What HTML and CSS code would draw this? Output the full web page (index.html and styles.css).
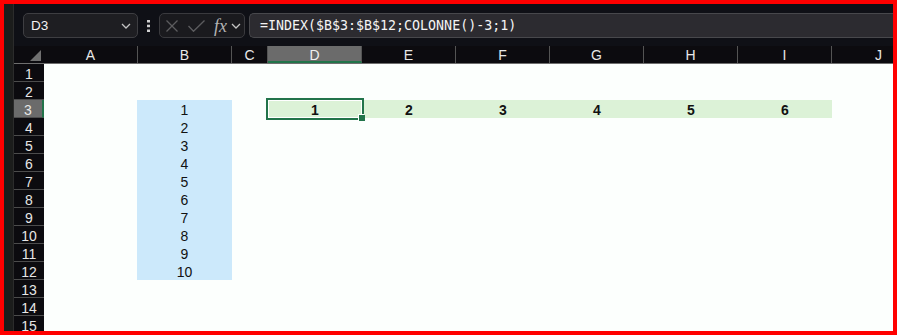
FILE: index.html
```html
<!DOCTYPE html>
<html lang="fr">
<head>
    <meta charset="UTF-8">
    <meta name="viewport" content="width=device-width, initial-scale=1.0">
    <title>INDEX COLONNE</title>
    <link rel="stylesheet" href="styles.css">
</head>
<body>

<div class="window">
    <div class="edge"></div>

    <div class="main">
        <div class="toolbar">
            <div class="name-box">
                <span>D3</span>
                <svg class="chevron" width="10" height="6" viewBox="0 0 10 6"><polyline points="1,1 5,5 9,1"/></svg>
            </div>
            <div class="dots">
                <svg width="3" height="12" viewBox="0 0 3 12"><rect x="0" y="0" width="3" height="2.5"/><rect x="0" y="4.7" width="3" height="2.5"/><rect x="0" y="9.5" width="3" height="2.5"/></svg>
            </div>
            <div class="fx-box">
                <svg class="cancel" width="12" height="12" viewBox="0 0 12 12"><line x1="0.5" y1="0.5" x2="11.5" y2="11.5"/><line x1="11.5" y1="0.5" x2="0.5" y2="11.5"/></svg>
                <svg class="enter" width="17" height="12" viewBox="0 0 17 12"><polyline points="0.5,6 5.5,11.3 16.5,0.5"/></svg>
                <span class="fx">fx</span>
                <svg class="chevron" width="10" height="6" viewBox="0 0 10 6"><polyline points="1,1 5,5 9,1"/></svg>
            </div>
            <div class="formula">=INDEX($B$3:$B$12;COLONNE()-3;1)</div>
        </div>

        <div class="sheet">
            <div class="col-heads">
                <div class="corner">
                    <svg width="11" height="11" viewBox="0 0 11 11"><polygon points="11,0 11,11 0,11"/></svg>
                </div>
                <div class="col-head">A</div>
                <div class="col-head">B</div>
                <div class="col-head narrow">C</div>
                <div class="col-head active">D</div>
                <div class="col-head">E</div>
                <div class="col-head">F</div>
                <div class="col-head">G</div>
                <div class="col-head">H</div>
                <div class="col-head">I</div>
                <div class="col-head">J</div>
            </div>

            <div class="body">
                <div class="row-heads">
                    <div class="row-head">1</div>
                    <div class="row-head">2</div>
                    <div class="row-head active">3</div>
                    <div class="row-head">4</div>
                    <div class="row-head">5</div>
                    <div class="row-head">6</div>
                    <div class="row-head">7</div>
                    <div class="row-head">8</div>
                    <div class="row-head">9</div>
                    <div class="row-head">10</div>
                    <div class="row-head">11</div>
                    <div class="row-head">12</div>
                    <div class="row-head">13</div>
                    <div class="row-head">14</div>
                    <div class="row-head">15</div>
                </div>

                <div class="cells">
                    <div class="source-range">
                        <div class="cell">1</div>
                        <div class="cell">2</div>
                        <div class="cell">3</div>
                        <div class="cell">4</div>
                        <div class="cell">5</div>
                        <div class="cell">6</div>
                        <div class="cell">7</div>
                        <div class="cell">8</div>
                        <div class="cell">9</div>
                        <div class="cell">10</div>
                    </div>

                    <div class="result-range">
                        <div class="cell selected">1<span class="fill-handle"></span></div>
                        <div class="cell">2</div>
                        <div class="cell">3</div>
                        <div class="cell">4</div>
                        <div class="cell">5</div>
                        <div class="cell">6</div>
                    </div>
                </div>
            </div>
        </div>
    </div>
</div>

</body>
</html>
```

FILE: styles.css
```css
body {
    margin: 0;
    background: #fff;
    font-family: "Liberation Sans", Arial, sans-serif;
}

.window {
    width: 897px;
    height: 335px;
    box-sizing: border-box;
    border: 4px solid #ff0000;
    display: flex;
    overflow: hidden;
    background: #0d0d10;
}

.edge {
    width: 9px;
    flex-shrink: 0;
    background: #1c1d1c;
    border-right: 1px solid #2c2c2c;
}

.main {
    flex: 1;
    min-width: 0;
    display: flex;
    flex-direction: column;
}

/* toolbar with name box and formula bar */
.toolbar {
    height: 42px;
    flex-shrink: 0;
    box-sizing: border-box;
    padding: 9px 0 0 9px;
    display: flex;
    align-items: flex-start;
    background: #0f1016;
}

.name-box {
    width: 115px;
    height: 25px;
    box-sizing: border-box;
    border: 1px solid #3e3e42;
    border-radius: 5px;
    background: #1e1e22;
    display: flex;
    align-items: center;
    justify-content: space-between;
    padding: 0 6px 0 7px;
    color: #f2f2f2;
    font-size: 13.5px;
    line-height: 23px;
}

.chevron polyline {
    fill: none;
    stroke: #c4c4c4;
    stroke-width: 1.3;
}

.dots {
    width: 21px;
    height: 25px;
    display: flex;
    align-items: center;
    justify-content: center;
}

.dots rect {
    fill: #d0d0d0;
}

.fx-box {
    width: 86px;
    height: 25px;
    box-sizing: border-box;
    border: 1px solid #3a3a3e;
    border-radius: 5px;
    background: #1a1a1e;
    display: flex;
    align-items: center;
    padding-left: 6px;
}

.cancel line, .enter polyline {
    fill: none;
    stroke: #5c5c5f;
    stroke-width: 1.3;
}

.enter {
    margin-left: 10px;
}

.fx {
    margin-left: 9px;
    font-family: "Liberation Serif", serif;
    font-style: italic;
    font-size: 18px;
    color: #b4b4b4;
    line-height: 20px;
}

.fx-box .chevron {
    margin-left: 4px;
}

.formula {
    flex: 1;
    height: 25px;
    margin-left: 4px;
    box-sizing: border-box;
    border: 1px solid #48484c;
    border-right: none;
    border-radius: 5px 0 0 5px;
    background: #2c2b30;
    padding-left: 10px;
    color: #f4f4f4;
    font-family: "DejaVu Sans Mono", monospace;
    font-size: 13.3px;
    line-height: 23px;
    white-space: nowrap;
}

/* grid headers */
.sheet {
    flex: 1;
    display: flex;
    flex-direction: column;
    overflow: hidden;
}

.col-heads {
    display: flex;
    height: 18px;
    flex-shrink: 0;
    background: #0c0b0f;
    border-bottom: 1px solid #6e6e6e;
    box-sizing: border-box;
}

.corner {
    width: 30px;
    flex-shrink: 0;
    display: flex;
    align-items: flex-end;
    justify-content: flex-end;
    padding: 0 3px 2px 0;
    box-sizing: border-box;
}

.corner polygon {
    fill: #707070;
}

.col-head {
    width: 94px;
    flex-shrink: 0;
    box-sizing: border-box;
    border-right: 1px solid #545454;
    text-align: center;
    color: #e8e8e8;
    font-size: 14px;
    line-height: 18px;
}

.col-head.narrow {
    width: 36px;
}

.col-head.active {
    background: #6b6b6b;
    border-bottom: 2px solid #22744a;
    color: #f0f0f0;
}

.body {
    flex: 1;
    display: flex;
}

.row-heads {
    width: 30px;
    flex-shrink: 0;
    background: #0c0b0f;
}

.row-head {
    height: 18px;
    box-sizing: border-box;
    border-bottom: 1px solid #4c4c4c;
    text-align: center;
    color: #e6e6e6;
    font-size: 14px;
    line-height: 20px;
}

.row-head.active {
    background: #6b6b6b;
    border-right: 2px solid #22744a;
}

/* cells */
.cells {
    flex: 1;
    display: grid;
    grid-template-columns: 94px 94px 36px repeat(7, 94px);
    grid-template-rows: repeat(15, 18px);
    background: #fcfffd;
    font-size: 14px;
    color: #111;
}

.cell {
    height: 18px;
    line-height: 20px;
    text-align: center;
}

.source-range {
    grid-column: 2;
    grid-row: 3 / span 10;
    background: #cce9fb;
    margin-left: -1px;
}

.result-range {
    grid-column: 4 / span 6;
    grid-row: 3;
    display: grid;
    grid-template-columns: repeat(6, 94px);
    background: #dcf2d7;
    font-weight: bold;
}

.selected {
    position: relative;
    z-index: 1;
    box-shadow: 0 0 0 2px #22744a, inset 0 0 0 1px #fff;
}

.fill-handle {
    position: absolute;
    right: -3px;
    bottom: -3px;
    width: 6px;
    height: 6px;
    background: #22744a;
    box-shadow: -1px -1px 0 0 #fff;
}
```
